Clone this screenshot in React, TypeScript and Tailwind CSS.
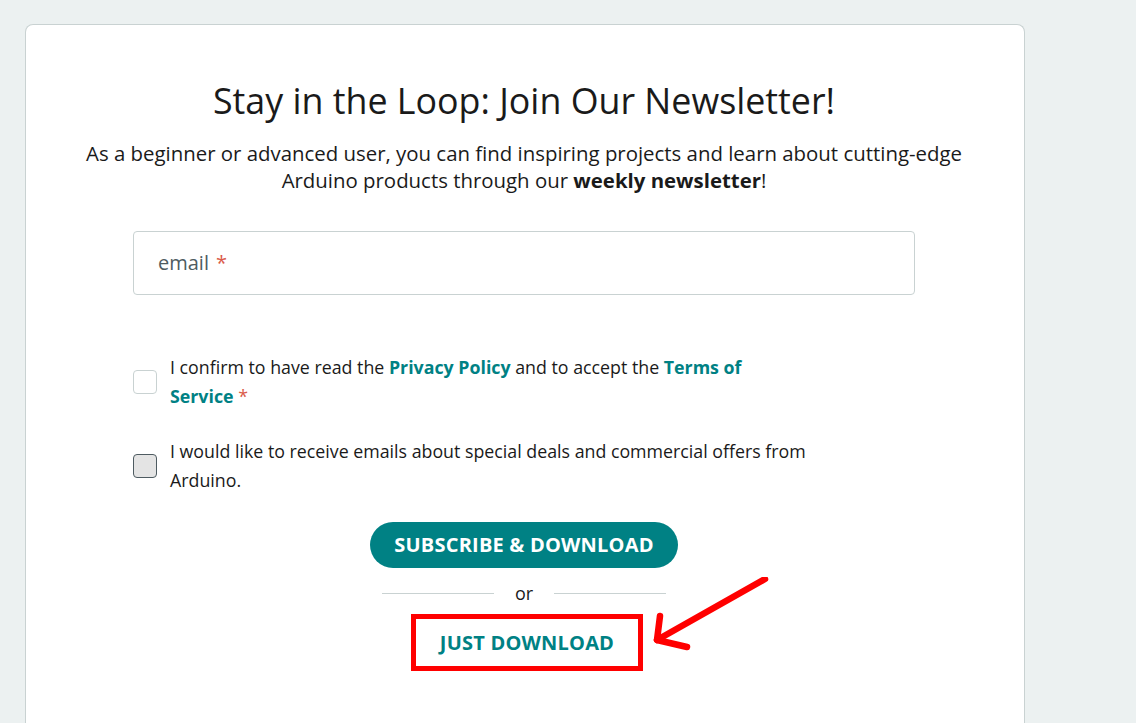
export default function App() {
  return (
    <div
      className="relative min-h-[723px] w-[1136px] overflow-hidden bg-[#ecf1f1] pl-[25px] pt-[24px]"
      style={{ fontFamily: '"Open Sans", "Noto Sans", sans-serif' }}
    >
      <div className="min-h-[720px] w-[1000px] rounded-t-lg border border-b-0 border-[#c9d2d2] bg-white pl-[59px] pr-[61px] pt-[51px]">
        <h1 className="text-center text-[35.8px] leading-[48px] text-[#1a1a1a]">
          Stay in the Loop: Join Our Newsletter!
        </h1>
        <p className="mx-auto mt-[16px] max-w-[884px] -mx-[3px] text-center text-[20.4px] leading-[27px] text-[#1a1a1a]">
          As a beginner or advanced user, you can find inspiring projects and learn about cutting-edge
          Arduino products through our <span className="font-bold">weekly newsletter</span>!
        </p>

        <div className="mx-auto mt-[37px] w-[782px]">
          {/* Email field */}
          <div className="flex h-[64px] items-center rounded border border-[#c9d2d2] px-[24px] text-[20px] text-[#4e5b61]">
            email <span className="ml-[7px] text-[#da5b4a]">*</span>
          </div>

          {/* Consents */}
          <div className="mt-[58px] flex flex-col gap-[26px]">
            <label className="flex items-center gap-[13px]">
              <span className="h-[24px] w-[24px] shrink-0 rounded border border-[#c9d2d2] bg-white" />
              <span className="w-[637px] text-[17.8px] leading-[29px] text-[#1a1a1a]">
                I confirm to have read the{' '}
                <span className="font-bold text-[#008184]">Privacy Policy</span> and to accept the{' '}
                <span className="font-bold text-[#008184]">Terms of Service</span>{' '}
                <span className="text-[#da5b4a]">*</span>
              </span>
            </label>
            <label className="flex items-center gap-[13px]">
              <span className="h-[24px] w-[24px] shrink-0 rounded border border-[#4e5b61] bg-[#e4e4e4]" />
              <span className="w-[637px] text-[17.8px] leading-[29px] text-[#1a1a1a]">
                I would like to receive emails about special deals and commercial offers from Arduino.
              </span>
            </label>
          </div>

          {/* Actions */}
          <div className="mt-[27px] flex flex-col items-center">
            <button className="h-[46px] rounded-full bg-[#008184] px-[24px] text-[20px] font-bold uppercase tracking-[0.2px] text-white">
              Subscribe &amp; Download
            </button>
            <div className="mt-[12px] flex w-[284px] items-center gap-[21px]">
              <span className="h-px flex-1 bg-[#c9d2d2]" />
              <span className="text-[18px] leading-[26px] text-[#1a1a1a]">or</span>
              <span className="h-px flex-1 bg-[#c9d2d2]" />
            </div>
            <div className="relative ml-[6px] mt-[8px]">
              <button className="h-[57px] border-[5px] border-[#ff0000] px-[24px] text-[20px] font-bold uppercase tracking-[0.2px] text-[#008184]">
                Just Download
              </button>
              <svg
                className="absolute left-[240px] top-[-37px]"
                width="125"
                height="90"
                viewBox="0 0 125 90"
                fill="none"
                stroke="#ff0000"
                strokeWidth="6.5"
                strokeLinecap="round"
                strokeLinejoin="round"
              >
                <path d="M114 2 L6 63" />
                <path d="M9 39 L6 63 L36 70" />
              </svg>
            </div>
          </div>
        </div>
      </div>
    </div>
  );
}
